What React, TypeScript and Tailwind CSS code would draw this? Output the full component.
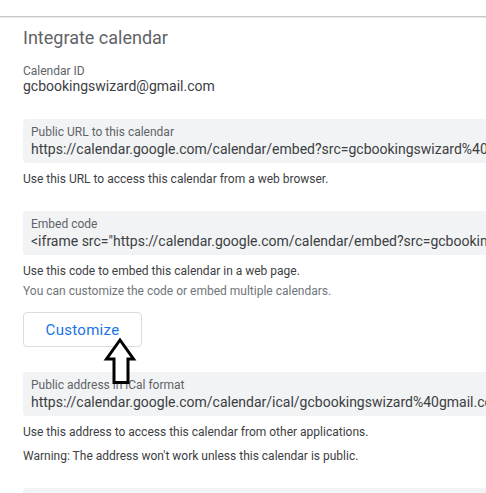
import React from 'react'

function InfoBox({ label, value }: { label: string; value: string }) {
  return (
    <div className="ml-[23px] h-[44px] w-[600px] rounded-[4px] bg-[#f1f3f4] pl-[8px] pt-[6px] whitespace-nowrap">
      <div className="text-[12px] leading-[15px] text-[#5f6368]">{label}</div>
      <div className="text-[14px] leading-[18px] text-[#3c4043]">{value}</div>
    </div>
  )
}

function UpArrow() {
  return (
    <svg
      className="absolute left-[100px] top-[336px]"
      width="40"
      height="52"
      viewBox="0 0 40 52"
    >
      <path
        d="M20 4 L6.5 23 L14 23 L14 46.5 L28 46.5 L28 23 L33.5 23 Z"
        fill="white"
        stroke="black"
        strokeWidth="3"
      />
    </svg>
  )
}

export default function App() {
  return (
    <div
      className="relative h-[493px] w-[486px] overflow-hidden bg-white"
      style={{ fontFamily: 'Roboto, "Liberation Sans", sans-serif' }}
    >
      <div className="h-[16px]" />
      <div className="h-[2px] border-t border-[#c8c8c8] bg-[#e6e6e6]" />
      <h2 className="ml-[23px] mt-[8px] text-[18px] leading-[24px] text-[#5f6368]">
        Integrate calendar
      </h2>

      <div className="ml-[23px] mt-[14px] text-[12px] leading-[14px] text-[#5f6368]">Calendar ID</div>
      <div className="ml-[23px] text-[14px] leading-[17px] text-[#3c4043]">gcbookingswizard@gmail.com</div>

      <div className="mt-[24px]">
        <InfoBox
          label="Public URL to this calendar"
          value="https://calendar.google.com/calendar/embed?src=gcbookingswizard%40gmail.com&ctz=America"
        />
      </div>
      <p className="ml-[23px] mt-[9px] text-[12px] leading-[15px] text-[#3c4043]">
        Use this URL to access this calendar from a web browser.
      </p>

      <div className="mt-[24px]">
        <InfoBox
          label="Embed code"
          value={'<iframe src="https://calendar.google.com/calendar/embed?src=gcbookingswizard%40gmail.com'}
        />
      </div>
      <p className="ml-[23px] mt-[9px] text-[12px] leading-[15px] text-[#3c4043]">
        Use this code to embed this calendar in a web page.
      </p>
      <p className="ml-[23px] mt-[5px] text-[12px] leading-[15px] text-[#70757a]">
        You can customize the code or embed multiple calendars.
      </p>

      <button className="ml-[23px] mt-[13px] flex h-[35px] w-[119px] items-center justify-center rounded-[4px] border border-[#dadce0] bg-white pt-[1px] text-[15px] font-normal tracking-[0.3px] text-[#1a73e8]">
        Customize
      </button>

      <div className="mt-[25px]">
        <InfoBox
          label="Public address in iCal format"
          value="https://calendar.google.com/calendar/ical/gcbookingswizard%40gmail.com/public/basic.ics"
        />
      </div>
      <p className="ml-[23px] mt-[9px] text-[12px] leading-[15px] text-[#3c4043]">
        Use this address to access this calendar from other applications.
      </p>
      <p className="ml-[23px] mt-[9px] text-[12px] leading-[15px] text-[#3c4043]">
        Warning: The address won't work unless this calendar is public.
      </p>

      <div className="ml-[23px] mt-[24px] h-[40px] w-[600px] rounded-[4px] bg-[#f1f3f4]" />

      <UpArrow />
    </div>
  )
}
